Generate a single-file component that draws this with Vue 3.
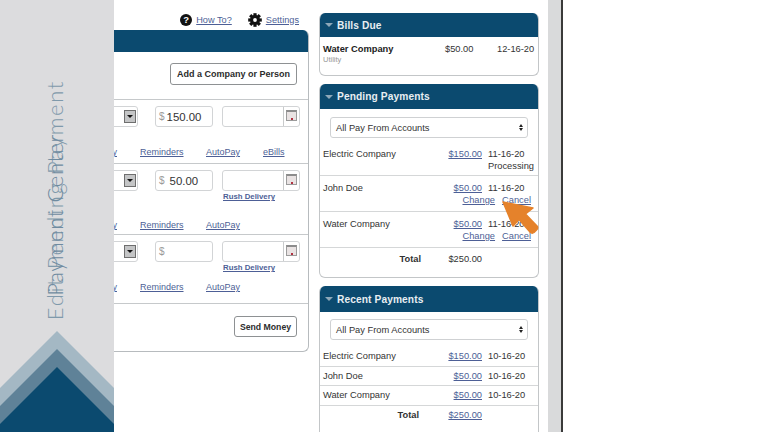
<script setup>
const gearAngles = [0, 45, 90, 135]
const billRows = [
  { id: 'a', amount: '150.00', rush: false, links: ['History', 'Reminders', 'AutoPay', 'eBills'] },
  { id: 'b', amount: '50.00', rush: true, links: ['History', 'Reminders', 'AutoPay'] },
  { id: 'c', amount: '', rush: true, links: ['History', 'Reminders', 'AutoPay'] }
]
const pending = [
  { name: 'Electric Company', amount: '$150.00', date: '11-16-20', status: 'Processing' },
  { name: 'John Doe', amount: '$50.00', date: '11-16-20', actions: true },
  { name: 'Water Company', amount: '$50.00', date: '11-16-20', actions: true }
]
const recent = [
  { name: 'Electric Company', amount: '$150.00', date: '10-16-20' },
  { name: 'John Doe', amount: '$50.00', date: '10-16-20' },
  { name: 'Water Company', amount: '$50.00', date: '10-16-20' }
]
</script>

<template>
  <div class="page">
    <aside class="sidebar">
      <span class="side-title side-edit">Edit Pending Payment</span>
      <span class="side-title side-center">Payment Center</span>
      <svg class="peaks" width="114" height="101" viewBox="0 0 114 101">
        <polygon points="57,0 114,57 114,101 0,101 0,57" fill="#a4b8c4" />
        <polygon points="57,18 114,75 114,101 0,101 0,75" fill="#5f8298" />
        <polygon points="57,36 114,93 114,101 0,101 0,93" fill="#0b4a6f" />
      </svg>
    </aside>

    <main class="main">
      <section class="left">
        <nav class="top-links">
          <span class="help">?</span>
          <a class="link how">How To?</a>
          <svg class="gear" width="14" height="14" viewBox="0 0 14 14">
            <rect v-for="a in gearAngles" :key="a" x="5.4" y="0.2" width="3.2" height="13.6" fill="#111" :transform="`rotate(${a} 7 7)`" />
            <circle cx="7" cy="7" r="3.4" fill="none" stroke="#111" stroke-width="3" />
            <circle cx="7" cy="7" r="1.9" fill="#fff" />
          </svg>
          <a class="link">Settings</a>
        </nav>
        <div class="pay-panel">
          <div class="pay-head"></div>
          <div class="company-row">
            <button class="btn btn-add">Add a Company or Person</button>
          </div>
          <div v-for="row in billRows" :key="row.id" class="bill-row" :class="`bill-${row.id}`">
            <div class="fields">
              <div class="acct">
                <span class="acct-btn"><i class="caret"></i></span>
              </div>
              <div class="amount">
                <span class="dollar">$</span>
                <span class="amount-val" :class="{ nudge: row.id === 'b' }">{{ row.amount }}</span>
              </div>
              <div class="date">
                <span class="cal"><i class="cal-dot"></i></span>
              </div>
            </div>
            <a v-if="row.rush" class="link rush">Rush Delivery</a>
            <div class="bill-links">
              <a v-for="l in row.links" :key="l" class="link">{{ l }}</a>
            </div>
          </div>
          <div class="send-row">
            <button class="btn btn-send">Send Money</button>
          </div>
        </div>
      </section>

      <section class="right">
        <div class="card card-bills">
          <h2 class="card-head head-bills"><i class="tri"></i>Bills Due</h2>
          <div class="bill-due">
            <strong>Water Company</strong>
            <span>$50.00</span>
            <span>12-16-20</span>
            <small>Utility</small>
          </div>
        </div>

        <div class="card card-pending">
          <h2 class="card-head"><i class="tri"></i>Pending Payments</h2>
          <div class="fake-select">
            <span>All Pay From Accounts</span>
            <span class="updown"><i class="up"></i><i class="down"></i></span>
          </div>
          <div class="tx-list tx-pending">
            <div v-for="p in pending" :key="p.name" class="tx" :class="{ 'tx-first': p.status }">
              <span>{{ p.name }}</span>
              <a class="link tx-amt">{{ p.amount }}</a>
              <span>{{ p.date }}</span>
              <span v-if="p.status" class="tx-status">{{ p.status }}</span>
              <span v-if="p.actions" class="tx-actions">
                <a class="link">Change</a>
                <a class="link">Cancel</a>
              </span>
            </div>
            <div class="tx tx-total">
              <strong>Total</strong>
              <span class="tx-amt">$250.00</span>
            </div>
          </div>
        </div>

        <div class="card card-recent">
          <h2 class="card-head head-recent"><i class="tri"></i>Recent Payments</h2>
          <div class="fake-select">
            <span>All Pay From Accounts</span>
            <span class="updown"><i class="up"></i><i class="down"></i></span>
          </div>
          <div class="tx-list tx-recent">
            <div v-for="p in recent" :key="p.name" class="tx">
              <span>{{ p.name }}</span>
              <a class="link tx-amt">{{ p.amount }}</a>
              <span>{{ p.date }}</span>
            </div>
            <div class="tx tx-total">
              <strong>Total</strong>
              <a class="link tx-amt">$250.00</a>
            </div>
          </div>
        </div>
      </section>
    </main>

    <div class="band"></div>
    <div class="rule"></div>
    <div class="blank"></div>

    <svg class="pointer" width="42" height="40" viewBox="0 0 42 40">
      <path d="M3 4 L33 10 L25.500 16 L37 28 Q38.500 30 36.500 32 L34 34.500 Q32 36 30 34 L19 21.500 L13 28 Z" fill="#e5822b" stroke="#e5822b" stroke-width="1.500" stroke-linejoin="round" />
    </svg>
  </div>
</template>

<style>
html, body { margin: 0; background: #fff; }
</style>

<style scoped>
.page {
  position: relative;
  display: flex;
  width: 768px;
  height: 432px;
  overflow: hidden;
  background: #fff;
  font-family: "Liberation Sans", Arial, sans-serif;
  font-size: 9.300px;
  color: #333;
}
.sidebar {
  position: relative;
  flex: 0 0 114px;
  background: #dcdcde;
}
.side-title {
  position: absolute;
  left: 44px;
  writing-mode: vertical-rl;
  transform: rotate(180deg);
  font-family: Lato, sans-serif;
  font-weight: 300;
  font-size: 22px;
  line-height: 22px;
  white-space: nowrap;
}
.side-edit { bottom: 112px; color: #7f99ab; letter-spacing: 1.650px; }
.side-center { bottom: 136px; color: #6f8ba0; letter-spacing: 0.6px; }
.peaks { position: absolute; left: 0; bottom: 0; display: block; }

.main {
  flex: 0 0 434px;
  display: flex;
  gap: 10px;
  min-width: 0;
}
.left { flex: 0 0 195px; min-width: 0; }
.right {
  flex: 0 0 220px;
  display: flex;
  flex-direction: column;
  gap: 8px;
  padding-top: 13px;
}
.band { flex: 0 0 13px; background: #d9dadb; }
.rule { flex: 0 0 2px; background: #3a3a3a; }
.blank { flex: 1; }

.link { color: #4d5f96; text-decoration: underline; }

.top-links {
  height: 30px;
  display: flex;
  align-items: center;
  justify-content: flex-end;
  padding: 9px 10px 0 0;
  box-sizing: border-box;
  font-size: 9.200px;
}
.help {
  width: 12px;
  height: 12px;
  border-radius: 50%;
  background: #111;
  color: #fff;
  font-weight: 700;
  font-size: 9.500px;
  line-height: 12px;
  text-align: center;
  margin-right: 4px;
}
.how { margin-right: 16px; }
.gear { margin-right: 4px; }

.pay-panel {
  height: 322px;
  box-sizing: border-box;
  border: 1px solid #b7bbbe;
  border-width: 0 1px 1px 0;
  border-radius: 0 6px 6px 0;
  overflow: hidden;
}
.pay-head { height: 22px; background: #0b4a6f; }
.company-row {
  height: 48px;
  box-sizing: border-box;
  padding: 11px 11px 0 0;
  display: flex;
  justify-content: flex-end;
  align-items: flex-start;
  border-bottom: 1px solid #c6c9cb;
}
.btn {
  background: #fff;
  border: 1px solid #8e9193;
  border-radius: 3px;
  font-family: inherit;
  font-weight: 700;
  color: #2c2c2c;
  padding: 0;
}
.btn-add { width: 127px; height: 22px; font-size: 9px; }
.btn-send { width: 63px; height: 21px; font-size: 8.700px; }

.bill-row {
  display: flex;
  flex-direction: column;
  box-sizing: border-box;
  padding-top: 6px;
  border-bottom: 1px solid #c6c9cb;
}
.bill-a { height: 64px; padding-bottom: 5px; }
.bill-b { height: 71px; padding-bottom: 3px; }
.bill-c { height: 69px; padding-bottom: 10px; }
.fields {
  display: flex;
  justify-content: flex-end;
  padding-right: 8px;
  gap: 17px;
}
.acct, .amount, .date {
  flex: none;
  height: 21px;
  box-sizing: border-box;
  border: 1px solid #d2d4d6;
  border-radius: 3px;
  display: flex;
  align-items: center;
}
.acct { width: 100px; justify-content: flex-end; padding-right: 1px; }
.acct-btn {
  width: 12px;
  height: 13px;
  background: #c4c5c6;
  border: 1px solid #6e6e6e;
  box-sizing: border-box;
  display: flex;
  align-items: center;
  justify-content: center;
}
.caret {
  width: 0;
  height: 0;
  border: 3px solid transparent;
  border-top: 3px solid #111;
  border-bottom: 0;
}
.amount { width: 58px; padding-left: 3px; gap: 2px; }
.dollar { color: #9a9a9a; font-size: 10px; }
.amount-val { font-size: 11.400px; color: #333; }
.amount-val.nudge { margin-left: 3px; }
.date {
  width: 78px;
  margin-left: -8px;
  justify-content: flex-end;
}
.cal {
  width: 16px;
  height: 19px;
  box-sizing: border-box;
  border-left: 1px solid #c9cbcc;
  position: relative;
  display: flex;
  align-items: center;
  justify-content: center;
}
.cal::before {
  content: "";
  position: absolute;
  left: 2px;
  top: 3px;
  width: 11px;
  height: 11px;
  background: #e9e3e3;
  border: 1px solid #9b9b9b;
  border-top: 2px solid #8c8c8c;
  box-sizing: border-box;
}
.cal-dot {
  position: relative;
  top: 2px;
  width: 2px;
  height: 2px;
  background: #b03040;
}
.rush {
  align-self: flex-end;
  width: 85px;
  margin-top: 1px;
  font-size: 7.800px;
  font-weight: 700;
  white-space: nowrap;
}
.bill-links {
  margin-top: auto;
  display: grid;
  grid-template-columns: minmax(0, 1fr) 43px 34px 21px;
  column-gap: 23px;
  padding-right: 24px;
  font-size: 9px;
  line-height: 12px;
  white-space: nowrap;
}
.bill-links .link:first-child { justify-self: end; }
.send-row {
  padding: 12px 11px 0 0;
  display: flex;
  justify-content: flex-end;
}

.card {
  flex: none;
  box-sizing: border-box;
  border: 1px solid #c3c6c8;
  border-top: 0;
  border-radius: 6px;
  overflow: hidden;
  background: #fff;
}
.card-bills { height: 63px; }
.card-pending { height: 194px; }
.card-recent { height: 160px; }
.card-head {
  margin: 0 -1px;
  height: 25px;
  display: flex;
  align-items: center;
  padding-left: 6px;
  gap: 4px;
  background: #0b4a6f;
  color: #e8eef2;
  font-size: 10.200px;
  font-weight: 700;
  letter-spacing: 0.1px;
}
.head-bills { height: 24px; }
.head-recent { height: 26px; }
.tri {
  width: 0;
  height: 0;
  border: 4px solid transparent;
  border-top: 4px solid #8ea8b9;
  border-bottom: 0;
}
.fake-select {
  margin: 8px 10px 0;
  height: 21px;
  box-sizing: border-box;
  border: 1px solid #cfd1d3;
  border-radius: 3px;
  display: flex;
  align-items: center;
  justify-content: space-between;
  padding: 0 4px 0 5px;
  font-size: 9.300px;
  color: #333;
}
.card-recent .fake-select { margin-top: 7px; }
.updown { display: flex; flex-direction: column; gap: 1px; }
.up, .down { width: 0; height: 0; border: 2px solid transparent; }
.up { border-top: 0; border-bottom: 3px solid #222; }
.down { border-bottom: 0; border-top: 3px solid #222; }

.tx {
  display: grid;
  grid-template-columns: minmax(0, 1fr) 55px 50px;
  align-content: start;
  column-gap: 6px;
  padding-left: 3px;
  border-bottom: 1px solid #d5d7d8;
  line-height: 12px;
  white-space: nowrap;
}
.tx-amt { text-align: right; }
.tx-status { grid-column: 3; }
.tx-actions {
  grid-column: 2 / 4;
  display: flex;
  justify-content: flex-end;
  gap: 7px;
  padding-right: 7px;
}
.tx-total { border-bottom: 0; }
.tx-total strong { text-align: right; }
.tx-pending { margin-top: 8px; }
.tx-pending .tx { padding-top: 6px; height: 36px; box-sizing: border-box; }
.tx-pending .tx-first { height: 30px; padding-top: 2px; }
.tx-pending .tx-total { padding-top: 5px; }
.tx-recent { margin-top: 7px; }
.tx-recent .tx { height: 19.500px; box-sizing: border-box; padding-top: 3px; }
.tx-recent .tx-total { padding-top: 3px; }
.tx-recent .tx-total strong { margin-right: 2px; }

.bill-due {
  display: grid;
  grid-template-columns: minmax(0, 1fr) 28px 36px;
  column-gap: 24px;
  padding: 6px 5px 0 3px;
  line-height: 12px;
  white-space: nowrap;
}
.bill-due strong { color: #222; }
.bill-due small {
  grid-column: 1 / -1;
  font-size: 7.500px;
  line-height: 10px;
  color: #999;
}

.pointer { position: absolute; left: 500px; top: 198px; }
</style>
